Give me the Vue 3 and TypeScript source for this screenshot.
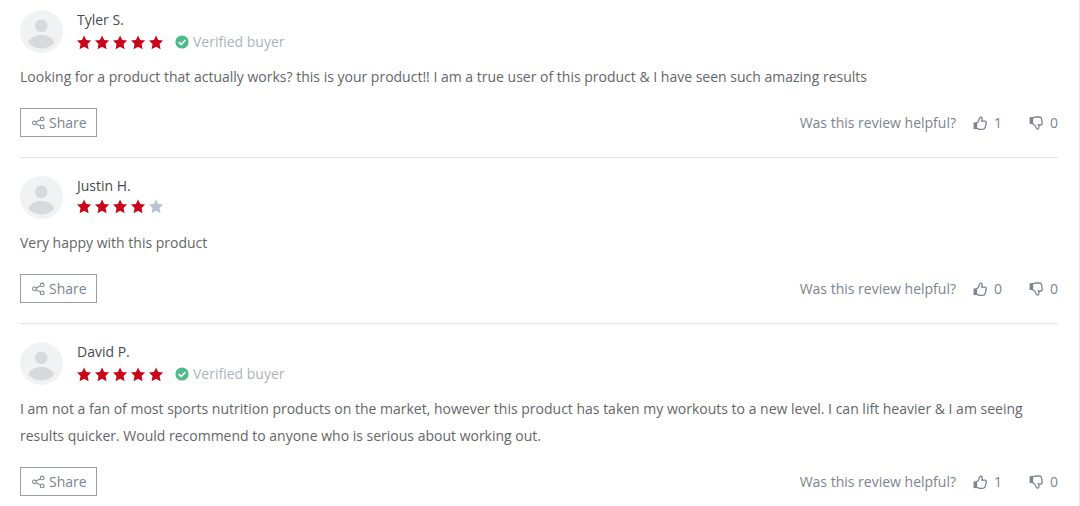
<script setup lang="ts">
interface Review {
  name: string
  stars: number
  verified: boolean
  text: string
  up: number
  down: number
}

const reviews: Review[] = [
  {
    name: 'Tyler S.',
    stars: 5,
    verified: true,
    text: 'Looking for a product that actually works? this is your product!! I am a true user of this product & I have seen such amazing results',
    up: 1,
    down: 0,
  },
  {
    name: 'Justin H.',
    stars: 4,
    verified: false,
    text: 'Very happy with this product',
    up: 0,
    down: 0,
  },
  {
    name: 'David P.',
    stars: 5,
    verified: true,
    text: 'I am not a fan of most sports nutrition products on the market, however this product has taken my workouts to a new level. I can lift heavier & I am seeing results quicker. Would recommend to anyone who is serious about working out.',
    up: 1,
    down: 0,
  },
]
</script>

<template>
  <main class="reviews">
    <article v-for="review in reviews" :key="review.name" class="review">
      <header class="head">
        <svg class="avatar" viewBox="0 0 43 43" aria-hidden="true">
          <circle cx="21.5" cy="21.5" r="21.5" fill="#f0f2f4" />
          <circle cx="21.2" cy="15.8" r="6.3" fill="#d6dadd" />
          <path d="M8.2 32.2C10.5 27.6 15.5 24.8 21.2 24.8S32 27.6 34.3 32.2C31.3 36.2 26.7 38.4 21.2 38.4S11.2 36.2 8.2 32.2Z" fill="#d6dadd" />
        </svg>
        <div class="who">
          <span class="name">{{ review.name }}</span>
          <div class="rating">
            <div class="stars" role="img" :aria-label="`${review.stars} out of 5 stars`">
              <svg v-for="n in 5" :key="n" class="star" :class="{ empty: n > review.stars }" viewBox="0 0 14 14">
                <path d="M6.600 .4 8.600 4.700 13.200 5.200 9.900 8.500 10.800 13.200 6.600 10.900 2.400 13.200 3.300 8.500 0 5.200 4.600 4.700Z" />
              </svg>
            </div>
            <span v-if="review.verified" class="verified">
              <svg class="check" viewBox="0 0 14 14" aria-hidden="true">
                <circle cx="7" cy="7" r="6.6" fill="#4dba8c" />
                <path d="M3.7 7.2 6.2 9.5 10.4 5" fill="none" stroke="#fff" stroke-width="1.8" />
              </svg>
              Verified buyer
            </span>
          </div>
        </div>
      </header>
      <p class="text">{{ review.text }}</p>
      <footer class="foot">
        <button class="share" type="button">
          <svg class="share-icon" viewBox="0 0 14 14" aria-hidden="true">
            <circle cx="2.6" cy="7.4" r="2" />
            <circle cx="11" cy="3.2" r="2" />
            <circle cx="11" cy="11.8" r="2" />
            <path d="M4.4 6.5 9.2 4.1M4.4 8.4 9.2 10.9" />
          </svg>
          Share
        </button>
        <div class="helpful">
          <span>Was this review helpful?</span>
          <button class="vote" type="button" aria-label="Helpful">
            <svg class="thumb" viewBox="0 0 14 14" aria-hidden="true">
              <path d="M3.5 6.9C5.2 6 6.1 4.6 6.5 2.4 6.8 .7 9.1 .8 9.2 2.7 9.2 3.7 9 4.4 8.6 5.2H11.7C13 5.2 13.5 6.1 13.2 7.3L12.1 11.7C11.8 12.8 11.2 13.3 10 13.3H7C5.6 13.3 5 12.4 3.5 12.3Z" />
              <path class="solid" d="M.6 6.4H3.3V13.1H.6Z" />
            </svg>
            <span>{{ review.up }}</span>
          </button>
          <button class="vote" type="button" aria-label="Not helpful">
            <svg class="thumb" viewBox="0 0 14 14" aria-hidden="true">
              <path d="M3.5 1.7C5 1.6 5.6 1 7 1H10.6C11.7 1 12.2 1.5 12.4 2.4L13.2 6.9C13.4 8.2 12.9 9 11.7 9H9.4C9.9 9.9 10 10.6 9.9 11.6 9.7 13.5 7.6 13.6 7.2 11.9 6.7 9.8 5.5 8.5 3.5 7.6Z" />
              <path class="solid" d="M.6 1.2H3.3V8H.6Z" />
            </svg>
            <span>{{ review.down }}</span>
          </button>
        </div>
      </footer>
    </article>
  </main>
</template>

<style>
body {
  margin: 0;
  background: #fff;
}
</style>

<style scoped>
.reviews {
  box-sizing: border-box;
  min-height: 100vh;
  padding: 10px 21px 0 20px;
  border-right: 1px solid #e6e7e8;
  font-family: "Open Sans", "Noto Sans", sans-serif;
  font-size: 14px;
  color: #646668;
}

.review + .review {
  margin-top: 20px;
  padding-top: 18px;
  border-top: 1px solid #e2e4e6;
}

.head {
  display: flex;
  gap: 14px;
  height: 43px;
}

.avatar {
  width: 43px;
  height: 43px;
  flex: none;
}

.name {
  display: block;
  line-height: 20px;
  font-weight: 500;
  color: #484a50;
}

.rating {
  display: flex;
  align-items: center;
  min-height: 20px;
  gap: 11px;
}

.stars {
  display: flex;
  gap: 3px;
}

.star {
  width: 15px;
  height: 15px;
  fill: #cb0618;
}

.star.empty {
  fill: #bcc5cf;
}

.verified {
  display: flex;
  align-items: center;
  gap: 4px;
  line-height: 24px;
  font-weight: 500;
  color: #aeb3bd;
}

.check {
  width: 14px;
  height: 14px;
}

.text {
  margin: 10px 0 18px;
  line-height: 27px;
}

.foot {
  display: flex;
  align-items: center;
  justify-content: space-between;
  font-weight: 500;
  color: #7c848e;
}

button {
  font: inherit;
  color: inherit;
  background: none;
  cursor: pointer;
}

.share {
  display: flex;
  align-items: center;
  gap: 4px;
  height: 29px;
  padding: 0 9px 0 11px;
  border: 1px solid #9a9fa6;
}

.share-icon,
.thumb {
  fill: none;
  stroke: currentColor;
}

.share-icon {
  width: 13px;
  height: 13px;
  stroke-width: 1.1;
}

.thumb {
  width: 14px;
  height: 14px;
  stroke-width: 1.3;
}

.solid {
  fill: currentColor;
  stroke: none;
}

.helpful {
  display: flex;
  align-items: center;
}

.vote {
  display: flex;
  align-items: center;
  gap: 7px;
  margin-left: 17px;
  padding: 0;
  border: 0;
}

.vote + .vote {
  margin-left: 27px;
}
</style>
